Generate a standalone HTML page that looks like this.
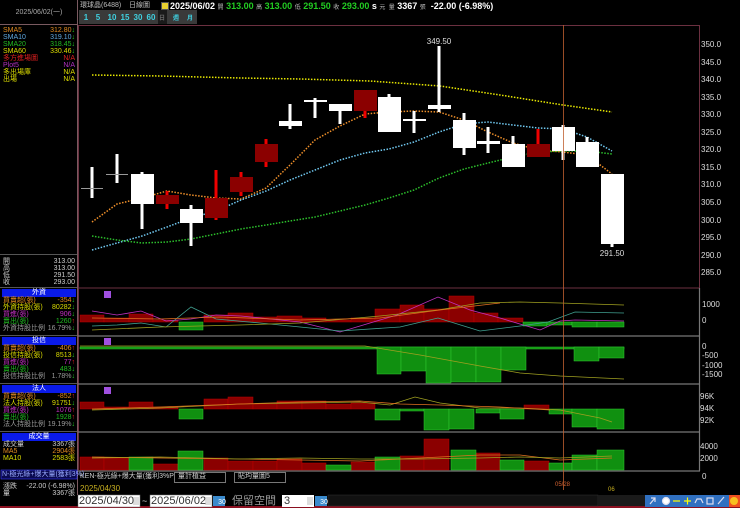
<!DOCTYPE html>
<html><head><meta charset="utf-8"><style>
*{margin:0;padding:0}
body{width:740px;height:508px;background:#000;overflow:hidden;position:relative;font-family:"Liberation Sans","Noto Sans CJK TC",sans-serif}
.t{position:absolute;white-space:nowrap;font-size:7px;line-height:7px}
.r{text-align:right}
svg{position:absolute;left:0;top:0}
</style></head><body>
<svg width="740" height="508" viewBox="0 0 740 508" font-family="Liberation Sans, Noto Sans CJK TC, sans-serif">
<!-- left panel borders -->
<rect x="0" y="0" width="77" height="508" fill="#000"/>
<line x1="77.5" y1="0" x2="77.5" y2="495" stroke="#7a5a60" stroke-width="1"/>
<line x1="0" y1="24.5" x2="77" y2="24.5" stroke="#7a5a60"/>
<line x1="0" y1="254.5" x2="77" y2="254.5" stroke="#555"/>
<!-- blue headers -->
<rect x="2" y="289" width="74" height="8" fill="#0a1ae8"/>
<rect x="2" y="337" width="74" height="8" fill="#0a1ae8"/>
<rect x="2" y="385" width="74" height="8" fill="#0a1ae8"/>
<rect x="2" y="433" width="74" height="8" fill="#0a1ae8"/>
<rect x="1" y="470" width="76" height="9" fill="#0a0a50" stroke="#3a3aff" stroke-width="0.6"/>
<line x1="0" y1="287.5" x2="77" y2="287.5" stroke="#555"/>
<line x1="0" y1="335.5" x2="77" y2="335.5" stroke="#555"/>
<line x1="0" y1="383.5" x2="77" y2="383.5" stroke="#555"/>
<line x1="0" y1="431.5" x2="77" y2="431.5" stroke="#555"/>

<!-- top button row -->
<g font-size="8" font-weight="bold" fill="#3fd0e0" text-anchor="middle">
<rect x="79" y="10" width="118" height="14" fill="#3a3a3a"/>
<rect x="158" y="10" width="9" height="14" fill="#1a1a1a"/>
<text x="86" y="20">1</text><text x="98" y="20">5</text><text x="112" y="20">10</text><text x="125" y="20">15</text><text x="138" y="20">30</text><text x="151" y="20">60</text>
<text x="162" y="20" fill="#666" font-size="6">日</text><text x="176" y="20" font-size="6">週</text><text x="190" y="20" font-size="6">月</text>
</g>

<!-- main chart border -->
<line x1="78" y1="25.5" x2="700" y2="25.5" stroke="#6b3040"/>
<line x1="699.5" y1="25" x2="699.5" y2="288" stroke="#6b3040"/>
<line x1="78.5" y1="25" x2="78.5" y2="470" stroke="#6b3040"/>
<line x1="78" y1="288" x2="700" y2="288" stroke="#6b3040"/>
<!-- separators -->
<g stroke="#777" stroke-width="1.2">
<line x1="78" y1="336" x2="700" y2="336"/>
<line x1="78" y1="384" x2="700" y2="384"/>
<line x1="78" y1="432" x2="700" y2="432"/>
<line x1="78" y1="471" x2="700" y2="471"/>
<line x1="699.5" y1="288" x2="699.5" y2="471"/>
</g>

<!-- axis labels -->
<g fill="#ddd" font-size="8">
<text x="701" y="47">350.0</text><text x="701" y="65">345.0</text><text x="701" y="82">340.0</text><text x="701" y="100">335.0</text><text x="701" y="117">330.0</text><text x="701" y="135">325.0</text><text x="701" y="152">320.0</text><text x="701" y="170">315.0</text><text x="701" y="187">310.0</text><text x="701" y="205">305.0</text><text x="701" y="223">300.0</text><text x="701" y="240">295.0</text><text x="701" y="258">290.0</text><text x="701" y="275">285.0</text>
<text x="702" y="307">1000</text><text x="702" y="323">0</text>
<text x="702" y="349">0</text><text x="702" y="358">-500</text><text x="702" y="368">-1000</text><text x="702" y="377">-1500</text>
<text x="700" y="399">96K</text><text x="700" y="411">94K</text><text x="700" y="423">92K</text>
<text x="700" y="449">4000</text><text x="700" y="461">2000</text><text x="702" y="479">0</text>
</g>

<!-- MA lines -->
<g fill="none" stroke-width="1.5" stroke-dasharray="1.5 1.5">
<polyline stroke="#e8e800" points="92,75 160,76 240,78 300,79 370,81 440,86 500,95 563,105 612,112"/>
<polyline stroke="#f0902a" points="92,222 117,204 142,198 167,191 191,195 216,198 241,199 266,188 290,165 315,140 340,126 365,114 389,112 414,111 439,112 464,120 488,132 513,143 538,150 563,152 587,155 612,174"/>
<polyline stroke="#70c8f0" points="92,250 117,243 142,236 167,227 191,218 216,211 241,200 266,191 290,180 315,170 340,160 365,153 389,149 414,142 439,132 464,124 488,122 513,125 538,128 563,129 587,137 612,151"/>
<polyline stroke="#2cc02c" points="92,236 117,240 142,243 167,242 191,239 216,234 241,229 266,225 290,221 315,217 340,211 365,205 389,198 414,190 439,178 464,169 488,163 513,157 538,152 563,151 587,151 612,154"/>
</g>

<!-- candles -->
<g>
<!-- C1 -->
<rect x="90.5" y="167" width="3" height="31" fill="#fff"/><rect x="81" y="188" width="22" height="1" fill="#999"/>
<!-- C2 -->
<rect x="115.5" y="154" width="3" height="29" fill="#fff"/><rect x="106" y="174" width="22" height="1" fill="#999"/>
<!-- C3 -->
<rect x="140.5" y="172" width="3" height="57" fill="#fff"/><rect x="131" y="174" width="23" height="30" fill="#fff"/>
<!-- C4 -->
<rect x="165.5" y="191" width="3" height="18" fill="#e00"/><rect x="156" y="195" width="23" height="9" fill="#8b0000"/>
<!-- C5 -->
<rect x="189.5" y="205" width="3" height="41" fill="#fff"/><rect x="180" y="209" width="23" height="14" fill="#fff"/>
<!-- C6 -->
<rect x="214.5" y="170" width="3" height="50" fill="#e00"/><rect x="205" y="198" width="23" height="20" fill="#8b0000"/>
<!-- C7 -->
<rect x="239.5" y="172" width="3" height="24" fill="#e00"/><rect x="230" y="177" width="23" height="15" fill="#8b0000"/>
<!-- C8 -->
<rect x="264.5" y="139" width="3" height="28" fill="#e00"/><rect x="255" y="144" width="23" height="18" fill="#8b0000"/>
<!-- C9 -->
<rect x="288.5" y="104" width="3" height="25" fill="#fff"/><rect x="279" y="121" width="23" height="5" fill="#fff"/>
<!-- C10 -->
<rect x="313.5" y="98" width="3" height="20" fill="#fff"/><rect x="304" y="100" width="23" height="2" fill="#fff"/>
<!-- C11 -->
<rect x="338.5" y="104" width="3" height="20" fill="#fff"/><rect x="329" y="104" width="23" height="7" fill="#fff"/>
<!-- C12 -->
<rect x="363.5" y="105" width="3" height="13" fill="#e00"/><rect x="354" y="90" width="23" height="21" fill="#8b0000"/>
<!-- C13 -->
<rect x="387.5" y="94" width="3" height="38" fill="#fff"/><rect x="378" y="97" width="23" height="35" fill="#fff"/>
<!-- C14 -->
<rect x="412.5" y="111" width="3" height="22" fill="#fff"/><rect x="403" y="119" width="23" height="2" fill="#fff"/>
<!-- C15 -->
<rect x="437.5" y="46" width="3" height="66" fill="#fff"/><rect x="428" y="105" width="23" height="4" fill="#fff"/>
<!-- C16 -->
<rect x="462.5" y="113" width="3" height="42" fill="#fff"/><rect x="453" y="120" width="23" height="28" fill="#fff"/>
<!-- C17 -->
<rect x="486.5" y="127" width="3" height="26" fill="#fff"/><rect x="477" y="141" width="23" height="3" fill="#fff"/>
<!-- C18 -->
<rect x="511.5" y="136" width="3" height="31" fill="#fff"/><rect x="502" y="144" width="23" height="23" fill="#fff"/>
<!-- C19 -->
<rect x="536.5" y="129" width="3" height="15" fill="#e00"/><rect x="527" y="144" width="23" height="13" fill="#8b0000"/>
<!-- C20 -->
<rect x="561.5" y="125" width="3" height="35" fill="#fff"/><rect x="552" y="127" width="23" height="24" fill="#fff"/>
<!-- C21 -->
<rect x="585.5" y="137" width="3" height="30" fill="#fff"/><rect x="576" y="142" width="23" height="25" fill="#fff"/>
<!-- C22 -->
<rect x="610.5" y="174" width="3" height="73" fill="#fff"/><rect x="601" y="174" width="23" height="70" fill="#fff"/>
</g>
<g fill="#ddd" font-size="8" text-anchor="middle">
<text x="439" y="44">349.50</text><text x="612" y="256">291.50</text>
</g>

<!-- panel 1 外資 -->
<g fill="#8b0000" stroke="#b00" stroke-width="0.5">
<rect x="80" y="315" width="24" height="7"/><rect x="104" y="318" width="25" height="4"/><rect x="129" y="314" width="24" height="8"/><rect x="153" y="320" width="25" height="2"/>
<rect x="204" y="315" width="24" height="7"/><rect x="228" y="313" width="25" height="9"/><rect x="253" y="317" width="24" height="5"/><rect x="277" y="316" width="25" height="6"/><rect x="302" y="318" width="24" height="4"/><rect x="326" y="320" width="25" height="2"/><rect x="351" y="318" width="24" height="4"/><rect x="375" y="309" width="25" height="13"/><rect x="400" y="305" width="24" height="17"/><rect x="424" y="309" width="25" height="13"/><rect x="449" y="296" width="25" height="26"/><rect x="474" y="313" width="24" height="9"/><rect x="498" y="318" width="25" height="4"/>
</g>
<g fill="#109010" stroke="#3c3" stroke-width="0.5">
<rect x="179" y="322" width="24" height="8"/><rect x="523" y="322" width="24" height="4"/><rect x="547" y="322" width="25" height="3"/><rect x="572" y="322" width="25" height="5"/><rect x="597" y="322" width="27" height="5"/>
</g>
<g fill="none" stroke-width="0.8">
<polyline stroke="#c030c0" points="92,311 117,315 141,311 166,321 191,319 216,315 241,316 300,322 340,332 370,323 397,315 438,297 470,310 500,318 540,330 560,321 575,320 624,321"/>
<polyline stroke="#40a090" points="92,326 117,325 141,323 166,327 191,307 216,319 260,323 300,327 340,331 400,327 438,318 480,331 520,326 548,322 575,312 624,313"/>
<polyline stroke="#a0a020" points="92,330 160,327 240,325 300,323 380,316 438,310 480,303 520,302 560,303 624,305"/>
<polyline stroke="#e07020" points="92,318 160,319 220,317 300,320 380,318 440,310 500,303"/>
</g>
<rect x="104" y="291" width="7" height="7" fill="#a050e0"/>

<!-- panel 2 投信 -->
<g fill="#109010" stroke="#3c3" stroke-width="0.5">
<rect x="80" y="347" width="544" height="2"/>
<rect x="377" y="347" width="24" height="27"/><rect x="401" y="347" width="25" height="24"/><rect x="426" y="347" width="25" height="36"/><rect x="451" y="347" width="25" height="35"/><rect x="476" y="347" width="25" height="35"/><rect x="501" y="347" width="25" height="23"/><rect x="574" y="347" width="25" height="14"/><rect x="599" y="347" width="25" height="11"/>
</g>
<polyline fill="none" stroke="#a0a020" stroke-width="0.8" points="80,346 365,346 420,355 480,366 520,373 560,376 624,379"/>
<rect x="104" y="338" width="7" height="7" fill="#a050e0"/>

<!-- panel 3 法人 -->
<g fill="#8b0000" stroke="#b00" stroke-width="0.5">
<rect x="80" y="402" width="24" height="7"/><rect x="104" y="407" width="25" height="2"/><rect x="129" y="402" width="24" height="7"/><rect x="153" y="407" width="25" height="2"/><rect x="204" y="399" width="24" height="10"/><rect x="228" y="397" width="25" height="12"/><rect x="253" y="404" width="24" height="5"/><rect x="277" y="401" width="25" height="8"/><rect x="302" y="401" width="24" height="8"/><rect x="326" y="404" width="25" height="5"/><rect x="351" y="403" width="24" height="6"/><rect x="524" y="405" width="25" height="4"/>
</g>
<g fill="#109010" stroke="#3c3" stroke-width="0.5">
<rect x="179" y="409" width="24" height="10"/><rect x="375" y="409" width="25" height="11"/><rect x="400" y="409" width="24" height="2"/><rect x="424" y="409" width="25" height="21"/><rect x="449" y="409" width="25" height="20"/><rect x="476" y="409" width="24" height="4"/><rect x="500" y="409" width="24" height="10"/><rect x="549" y="409" width="23" height="5"/><rect x="572" y="409" width="25" height="18"/><rect x="597" y="409" width="27" height="20"/>
</g>
<g fill="none" stroke-width="0.8">
<polyline stroke="#a0a020" points="92,410 160,408 240,404 300,403 360,402 390,405 415,397 440,403 480,408 520,408 560,410 600,418 612,422"/>
<polyline stroke="#e07020" points="92,409 160,407 240,404 300,402 360,401 400,404 440,405 500,407 550,410"/>
</g>
<rect x="104" y="387" width="7" height="7" fill="#a050e0"/>

<!-- panel 4 volume -->
<g fill="#8b0000" stroke="#b00" stroke-width="0.5">
<rect x="80" y="457" width="24" height="13"/><rect x="104" y="458" width="25" height="12"/><rect x="153" y="464" width="25" height="6"/><rect x="204" y="458" width="24" height="12"/><rect x="228" y="461" width="25" height="9"/><rect x="253" y="461" width="24" height="9"/><rect x="277" y="459" width="25" height="11"/><rect x="302" y="463" width="24" height="7"/><rect x="351" y="462" width="24" height="8"/><rect x="400" y="456" width="24" height="14"/><rect x="424" y="439" width="25" height="31"/><rect x="476" y="453" width="24" height="17"/><rect x="524" y="461" width="25" height="9"/>
</g>
<g fill="#109010" stroke="#3c3" stroke-width="0.5">
<rect x="129" y="457" width="24" height="13"/><rect x="178" y="451" width="25" height="19"/><rect x="326" y="465" width="25" height="5"/><rect x="375" y="457" width="25" height="13"/><rect x="451" y="450" width="25" height="20"/><rect x="500" y="460" width="24" height="10"/><rect x="549" y="463" width="23" height="7"/><rect x="572" y="455" width="25" height="15"/><rect x="597" y="450" width="27" height="20"/>
</g>
<g fill="none" stroke-width="0.8">
<polyline stroke="#e07020" points="92,457 160,458 240,459 300,460 360,461 420,458 480,455 520,455 560,460 612,458"/>
<polyline stroke="#a0a020" points="92,458 160,457 240,459 300,458 360,459 420,459 480,458 520,457 560,458 612,456"/>
</g>

<!-- crosshair -->
<line x1="563.5" y1="25" x2="563.5" y2="490" stroke="#c06030" stroke-width="0.8"/>

<!-- bottom bar -->
<rect x="0" y="495" width="740" height="13" fill="#000"/>
<rect x="0" y="506" width="740" height="2" fill="#8b1020"/>
<rect x="78" y="495" width="62" height="12" fill="#fff" stroke="#777" stroke-width="0.5"/>
<rect x="133" y="497" width="6" height="8" fill="#ddd"/>
<rect x="150" y="495" width="62" height="12" fill="#fff" stroke="#777" stroke-width="0.5"/>
<rect x="205" y="497" width="6" height="8" fill="#ddd"/>
<rect x="213" y="496" width="12" height="10" fill="#3a8acc"/>
<rect x="282" y="495" width="32" height="12" fill="#fff"/>
<rect x="307" y="497" width="6" height="8" fill="#ddd"/>
<rect x="315" y="496" width="12" height="10" fill="#3a8acc"/>
<rect x="328" y="495" width="270" height="11" fill="#111" stroke="#333" stroke-width="0.5"/>
<rect x="598" y="495" width="145" height="11" fill="#1a1a1a"/>
<rect x="645" y="495" width="85" height="12" fill="#3070c0"/>
<rect x="729" y="495" width="11" height="12" fill="#f05020"/>
<circle cx="734" cy="501" r="4" fill="#f8c020"/>
<g stroke="#dde" stroke-width="1.2" fill="none">
<path d="M650 504 L655 498 M651 498 L655 498 L655 502"/>
<circle cx="666" cy="501" r="3.5" fill="#fff"/>
<path d="M673 501 H680" stroke="#ff0"/>
<path d="M684 501 H691 M687.5 497.5 V504.5" stroke="#ff0"/>
<path d="M695 503 L697 499 L701 499 L703 503"/>
<rect x="707" y="498" width="6" height="6"/>
<path d="M718 504 L724 497"/>
</g>
<g fill="#ddd" font-size="7"><text x="222" y="504" text-anchor="middle" fill="#fff">30</text><text x="324" y="504" text-anchor="middle" fill="#fff">30</text></g>
</svg>

<!-- top title -->
<div class="t" style="left:3px;top:9px;color:#aaa;width:72px;text-align:center;font-size:7px">2025/06/02(一)</div>
<div class="t" style="left:80px;top:2px;font-size:7px;color:#bbb">環球晶(6488)&nbsp;&nbsp;&nbsp;&nbsp;日線圖</div>
<div style="position:absolute;left:161px;top:2px;width:6px;height:6px;background:#e8d030;border:1px solid #555"></div>
<div class="t" style="left:170px;top:1px;font-size:9px;line-height:10px;font-weight:bold;color:#fff">2025/06/02 <span style="font-size:6px;color:#bbb;font-weight:normal">開</span> <span style="color:#2c2">313.00</span> <span style="font-size:6px;color:#bbb;font-weight:normal">高</span> <span style="color:#2c2">313.00</span> <span style="font-size:6px;color:#bbb;font-weight:normal">低</span> <span style="color:#2c2">291.50</span> <span style="font-size:6px;color:#bbb;font-weight:normal">收</span> <span style="color:#2c2">293.00</span> s <span style="font-size:6px;color:#bbb;font-weight:normal">元 &nbsp;量</span> 3367 <span style="font-size:6px;color:#bbb;font-weight:normal">張</span> &nbsp;-22.00 (-6.98%)</div>

<!-- left MA list -->
<div class="t" style="left:3px;top:27px;color:#e08a20">SMA5</div><div class="t r" style="right:665px;top:27px;color:#e08a20">312.80<span style="color:#2c2">↓</span></div>
<div class="t" style="left:3px;top:34px;color:#60a8e0">SMA10</div><div class="t r" style="right:665px;top:34px;color:#60a8e0">319.10<span style="color:#2c2">↓</span></div>
<div class="t" style="left:3px;top:41px;color:#2b2">SMA20</div><div class="t r" style="right:665px;top:41px;color:#2b2">318.45<span style="color:#2c2">↓</span></div>
<div class="t" style="left:3px;top:48px;color:#dd0">SMA60</div><div class="t r" style="right:665px;top:48px;color:#dd0">330.46<span style="color:#2c2">↓</span></div>
<div class="t" style="left:3px;top:55px;color:#e02020">多方進場圖</div><div class="t r" style="right:665px;top:55px;color:#e02020">N/A</div>
<div class="t" style="left:3px;top:62px;color:#b030c0">Plot5</div><div class="t r" style="right:665px;top:62px;color:#b030c0">N/A</div>
<div class="t" style="left:3px;top:69px;color:#dd0">多出場庫</div><div class="t r" style="right:665px;top:69px;color:#dd0">N/A</div>
<div class="t" style="left:3px;top:76px;color:#dd0">出場</div><div class="t r" style="right:665px;top:76px;color:#dd0">N/A</div>

<!-- OHLC -->
<div class="t" style="left:3px;top:258px;color:#ccc">開</div><div class="t r" style="right:665px;top:258px;color:#ccc">313.00</div>
<div class="t" style="left:3px;top:265px;color:#ccc">高</div><div class="t r" style="right:665px;top:265px;color:#ccc">313.00</div>
<div class="t" style="left:3px;top:272px;color:#ccc">低</div><div class="t r" style="right:665px;top:272px;color:#ccc">291.50</div>
<div class="t" style="left:3px;top:279px;color:#ccc">收</div><div class="t r" style="right:665px;top:279px;color:#ccc">293.00</div>

<!-- 外資 -->
<div class="t" style="left:2px;width:74px;text-align:center;top:289px;color:#fff">外資</div>
<div class="t" style="left:3px;top:297px;color:#e08a20">買賣超(張)</div><div class="t r" style="right:665px;top:297px;color:#e08a20">-354<span style="color:#2c2">↓</span></div>
<div class="t" style="left:3px;top:304px;color:#dd0">外資持股(張)</div><div class="t r" style="right:665px;top:304px;color:#dd0">80282<span style="color:#2c2">↓</span></div>
<div class="t" style="left:3px;top:311px;color:#c030c0">買進(張)</div><div class="t r" style="right:665px;top:311px;color:#c030c0">906<span style="color:#2c2">↓</span></div>
<div class="t" style="left:3px;top:318px;color:#2b2">賣出(張)</div><div class="t r" style="right:665px;top:318px;color:#2b2">1260<span style="color:#e22">↑</span></div>
<div class="t" style="left:3px;top:325px;color:#999">外資持股比例</div><div class="t r" style="right:665px;top:325px;color:#999">16.79%<span style="color:#2c2">↓</span></div>

<!-- 投信 -->
<div class="t" style="left:2px;width:74px;text-align:center;top:337px;color:#fff">投信</div>
<div class="t" style="left:3px;top:345px;color:#e08a20">買賣超(張)</div><div class="t r" style="right:665px;top:345px;color:#e08a20">-406<span style="color:#e22">↑</span></div>
<div class="t" style="left:3px;top:352px;color:#dd0">投信持股(張)</div><div class="t r" style="right:665px;top:352px;color:#dd0">8513<span style="color:#2c2">↓</span></div>
<div class="t" style="left:3px;top:359px;color:#c030c0">買進(張)</div><div class="t r" style="right:665px;top:359px;color:#c030c0">77<span style="color:#e22">↑</span></div>
<div class="t" style="left:3px;top:366px;color:#2b2">賣出(張)</div><div class="t r" style="right:665px;top:366px;color:#2b2">483<span style="color:#2c2">↓</span></div>
<div class="t" style="left:3px;top:373px;color:#999">投信持股比例</div><div class="t r" style="right:665px;top:373px;color:#999">1.78%<span style="color:#2c2">↓</span></div>

<!-- 法人 -->
<div class="t" style="left:2px;width:74px;text-align:center;top:385px;color:#fff">法人</div>
<div class="t" style="left:3px;top:393px;color:#e08a20">買賣超(張)</div><div class="t r" style="right:665px;top:393px;color:#e08a20">-852<span style="color:#e22">↑</span></div>
<div class="t" style="left:3px;top:400px;color:#dd0">法人持股(張)</div><div class="t r" style="right:665px;top:400px;color:#dd0">91751<span style="color:#2c2">↓</span></div>
<div class="t" style="left:3px;top:407px;color:#c030c0">買進(張)</div><div class="t r" style="right:665px;top:407px;color:#c030c0">1076<span style="color:#e22">↑</span></div>
<div class="t" style="left:3px;top:414px;color:#2b2">賣出(張)</div><div class="t r" style="right:665px;top:414px;color:#2b2">1928<span style="color:#e22">↑</span></div>
<div class="t" style="left:3px;top:421px;color:#999">法人持股比例</div><div class="t r" style="right:665px;top:421px;color:#999">19.19%<span style="color:#2c2">↓</span></div>

<!-- 成交量 -->
<div class="t" style="left:2px;width:74px;text-align:center;top:433px;color:#fff">成交量</div>
<div class="t" style="left:3px;top:441px;color:#ccc">成交量</div><div class="t r" style="right:665px;top:441px;color:#ccc">3367張</div>
<div class="t" style="left:3px;top:448px;color:#e08a20">MA5</div><div class="t r" style="right:665px;top:448px;color:#e08a20">2904張</div>
<div class="t" style="left:3px;top:455px;color:#dd0">MA10</div><div class="t r" style="right:665px;top:455px;color:#dd0">2583張</div>

<div class="t" style="left:2px;top:471px;color:#9af">N-極光綠+爆大量(獲利3%)</div>
<div class="t" style="left:3px;top:483px;color:#ccc">漲跌</div><div class="t r" style="right:665px;top:483px;color:#ccc">-22.00 (-6.98%)</div>
<div class="t" style="left:3px;top:490px;color:#ccc">量</div><div class="t r" style="right:665px;top:490px;color:#ccc">3367張</div>

<!-- chart bottom strip -->
<div class="t" style="left:80px;top:473px;color:#ccc">KEN-極光綠+爆大量(獲利3%P)</div>
<div style="position:absolute;left:174px;top:472px;width:50px;height:9px;border:1px solid #777;background:#000"></div>
<div class="t" style="left:178px;top:473px;color:#ccc">量計植益</div>
<div style="position:absolute;left:234px;top:472px;width:50px;height:9px;border:1px solid #777;background:#000"></div>
<div class="t" style="left:238px;top:473px;color:#ccc">貼均量圖5</div>
<div class="t" style="left:80px;top:485px;color:#c8b020;font-size:8px">2025/04/30</div>
<div class="t" style="left:555px;top:482px;color:#d06030;font-size:6px">05/28</div>
<div class="t" style="left:608px;top:487px;color:#c8b020;font-size:6px">06</div>

<div class="t" style="left:79px;top:496px;color:#333;font-size:11px;line-height:11px">2025/04/30</div>
<div class="t" style="left:142px;top:496px;color:#ccc;font-size:9px;line-height:10px">~</div>
<div class="t" style="left:151px;top:496px;color:#333;font-size:11px;line-height:11px">2025/06/02</div>
<div class="t" style="left:232px;top:495px;color:#999;font-size:11px;line-height:12px">保留空間</div>
<div class="t" style="left:284px;top:496px;color:#333;font-size:11px;line-height:11px">3</div>
</body></html>
